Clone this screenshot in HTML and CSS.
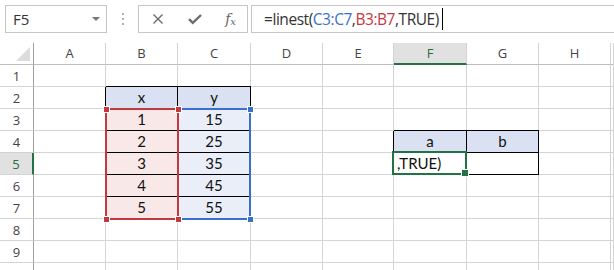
FILE: index.html
```html
<!doctype html>
<html lang="en">
<head>
  <meta charset="utf-8">
  <title>LINEST sheet</title>
  <link rel="stylesheet" href="styles.css">
</head>
<body>
  <div class="toolbar">
    <div class="namebox"><span>F5</span><i class="caret"></i></div>
    <div class="grip"><b></b><b></b><b></b></div>
    <div class="fxbtns">
      <svg class="ico" width="14" height="14" viewBox="0 0 14 14"><path d="M2.5 2.5l9 9M11.5 2.5l-9 9" stroke="#6b6b6b" stroke-width="1.4" fill="none"/></svg>
      <svg class="ico" width="16" height="14" viewBox="0 0 16 14"><path d="M2 7.2l3.8 3.6L14 3" stroke="#6b6b6b" stroke-width="2.4" fill="none"/></svg>
      <span class="fx">f<sub>x</sub></span>
    </div>
    <div class="formula">=linest(<span class="ref-c">C3:C7</span>,<span class="ref-b">B3:B7</span>,TRUE)<i class="cursor"></i></div>
  </div>

  <div class="sheet">
    <div class="c corner"><i></i></div>
    <div class="c ch">A</div><div class="c ch">B</div><div class="c ch">C</div><div class="c ch">D</div>
    <div class="c ch">E</div><div class="c ch sel">F</div><div class="c ch">G</div><div class="c ch">H</div><div class="c ch"></div>

    <div class="c rh">1</div>
    <div class="c"></div><div class="c"></div><div class="c"></div><div class="c"></div><div class="c"></div><div class="c"></div><div class="c"></div><div class="c"></div><div class="c"></div>

    <div class="c rh">2</div>
    <div class="c"></div><div class="c tb hd">x</div><div class="c tb hd">y</div><div class="c"></div><div class="c"></div><div class="c"></div><div class="c"></div><div class="c"></div><div class="c"></div>

    <div class="c rh">3</div>
    <div class="c"></div>
    <div class="c tb xs">1
      <div class="range red"><i class="h tl"></i><i class="h tr"></i><i class="h bl"></i><i class="h br"></i></div>
    </div>
    <div class="c tb ys">15
      <div class="range blue"><i class="h tr"></i><i class="h br"></i></div>
    </div>
    <div class="c"></div><div class="c"></div><div class="c"></div><div class="c"></div><div class="c"></div><div class="c"></div>

    <div class="c rh">4</div>
    <div class="c"></div><div class="c tb xs">2</div><div class="c tb ys">25</div><div class="c"></div><div class="c"></div>
    <div class="c tb hd">a</div><div class="c tb hd">b</div><div class="c"></div><div class="c"></div>

    <div class="c rh sel">5</div>
    <div class="c"></div><div class="c tb xs">3</div><div class="c tb ys">35</div><div class="c"></div><div class="c"></div>
    <div class="c tb left">,TRUE)<div class="cursel"><i class="fill"></i></div></div><div class="c tb"></div><div class="c"></div><div class="c"></div>

    <div class="c rh">6</div>
    <div class="c"></div><div class="c tb xs">4</div><div class="c tb ys">45</div><div class="c"></div><div class="c"></div><div class="c"></div><div class="c"></div><div class="c"></div><div class="c"></div>

    <div class="c rh">7</div>
    <div class="c"></div><div class="c tb xs">5</div><div class="c tb ys">55</div><div class="c"></div><div class="c"></div><div class="c"></div><div class="c"></div><div class="c"></div><div class="c"></div>

    <div class="c rh">8</div>
    <div class="c"></div><div class="c"></div><div class="c"></div><div class="c"></div><div class="c"></div><div class="c"></div><div class="c"></div><div class="c"></div><div class="c"></div>

    <div class="c rh">9</div>
    <div class="c"></div><div class="c"></div><div class="c"></div><div class="c"></div><div class="c"></div><div class="c"></div><div class="c"></div><div class="c"></div><div class="c"></div>

    <div class="c rh"></div>
    <div class="c"></div><div class="c"></div><div class="c"></div><div class="c"></div><div class="c"></div><div class="c"></div><div class="c"></div><div class="c"></div><div class="c"></div>
  </div>
</body>
</html>
```

FILE: styles.css
```css
:root{
  --grid:#d4d4d4; --hdr-line:#bdbdbd; --green:#217346;
  --red:#c4393f; --blue:#3a70c9; --tbl:#d9e1f2;
}
html,body{margin:0;padding:0;background:#fff;overflow:hidden}
body{font-family:"Open Sans","Noto Sans",sans-serif;color:#333;width:614px;height:270px}

/* formula bar */
.toolbar{display:flex;align-items:flex-start;height:43px;box-sizing:border-box;padding-top:5px;padding-left:5px}
.namebox{
  width:102px;height:28px;box-sizing:border-box;border:1px solid #c6c6c6;
  display:flex;align-items:center;justify-content:space-between;padding:0 6px 0 7px;
  font-size:15px;color:#333
}
.caret{width:0;height:0;border-left:4px solid transparent;border-right:4px solid transparent;border-top:4px solid #777}
.grip{width:31px;height:28px;display:flex;flex-direction:column;align-items:center;justify-content:center;gap:3px}
.grip b{width:2px;height:2px;background:#b0b0b0}
.fxbtns{
  width:110px;height:28px;box-sizing:border-box;border:1px solid #c6c6c6;
  display:flex;align-items:center;justify-content:space-between;padding:0 11px 0 12px
}
.fx{font-family:"DejaVu Serif","Liberation Serif",serif;font-style:italic;font-size:14px;color:#666;line-height:1}
.fx sub{font-size:10px;vertical-align:-1px}
.formula{
  flex:1;height:28px;box-sizing:border-box;border:1px solid #c6c6c6;border-right:0;margin-left:3px;
  display:flex;align-items:center;padding-left:12px;font-size:15.5px;letter-spacing:-.45px;color:#333;white-space:pre
}
.ref-c{color:#3a70c9}
.ref-b{color:#c4393f}
.cursor{width:1px;height:22px;background:#000;margin-left:3px}

/* sheet grid */
.sheet{
  display:grid;
  grid-template-columns:34px 72px 72px 73px 72px 71px 73px 72px 72px 1fr;
  grid-auto-rows:22px;
}
.c{
  box-sizing:border-box;border-right:1px solid var(--grid);border-bottom:1px solid var(--grid);
  font-family:"Lato","Liberation Sans",sans-serif;font-size:15px;line-height:21px;text-align:center;color:#111;
  position:relative
}
.ch,.rh,.corner{font-family:"Open Sans","Noto Sans",sans-serif;font-size:13px;color:#444;line-height:20px}
.ch{border-bottom-color:var(--hdr-line)}
.rh{border-right-color:#a0a0a0;line-height:22px}
.corner{border-right-color:#a0a0a0;border-bottom-color:var(--hdr-line)}
.corner i{position:absolute;right:3px;bottom:3px;width:0;height:0;border-left:14px solid transparent;border-bottom:14px solid #dcdcdc}
.ch.sel{background:#e1e1e1;border-bottom:2px solid var(--green);color:#2d6a47}
.rh.sel{background:#e1e1e1;border-right:2px solid var(--green);color:#2d6a47}

/* bordered table cells */
.tb{border-right-color:#000;border-bottom-color:#000;box-shadow:0 -1px 0 #000,-1px 0 0 #000}
.hd{background:var(--tbl)}
.xs{background:#f9e8e8}
.ys{background:#e9eef8}
.left{text-align:left;padding-left:3px}

/* reference highlights */
.range{position:absolute;top:-1px;left:-1px;height:112px;box-sizing:border-box;border:2px solid}
.range.red{width:74px;border-color:var(--red);z-index:2}
.range.blue{width:74px;border-color:var(--blue);z-index:1}
.h{position:absolute;width:7px;height:7px;box-sizing:border-box;border:1px solid #fff}
.red .h{background:var(--red)}
.blue .h{background:var(--blue)}
.h.tl{left:-4px;top:-4px}
.h.tr{right:-5px;top:-4px}
.h.bl{left:-4px;bottom:-5px}
.h.br{right:-5px;bottom:-5px}

/* active cell */
.cursel{position:absolute;top:-2px;left:-2px;width:75px;height:24px;border:2px solid var(--green);box-sizing:border-box;z-index:3}
.fill{position:absolute;right:-4px;bottom:-4px;width:6px;height:6px;background:var(--green);border:1px solid #fff}
```
